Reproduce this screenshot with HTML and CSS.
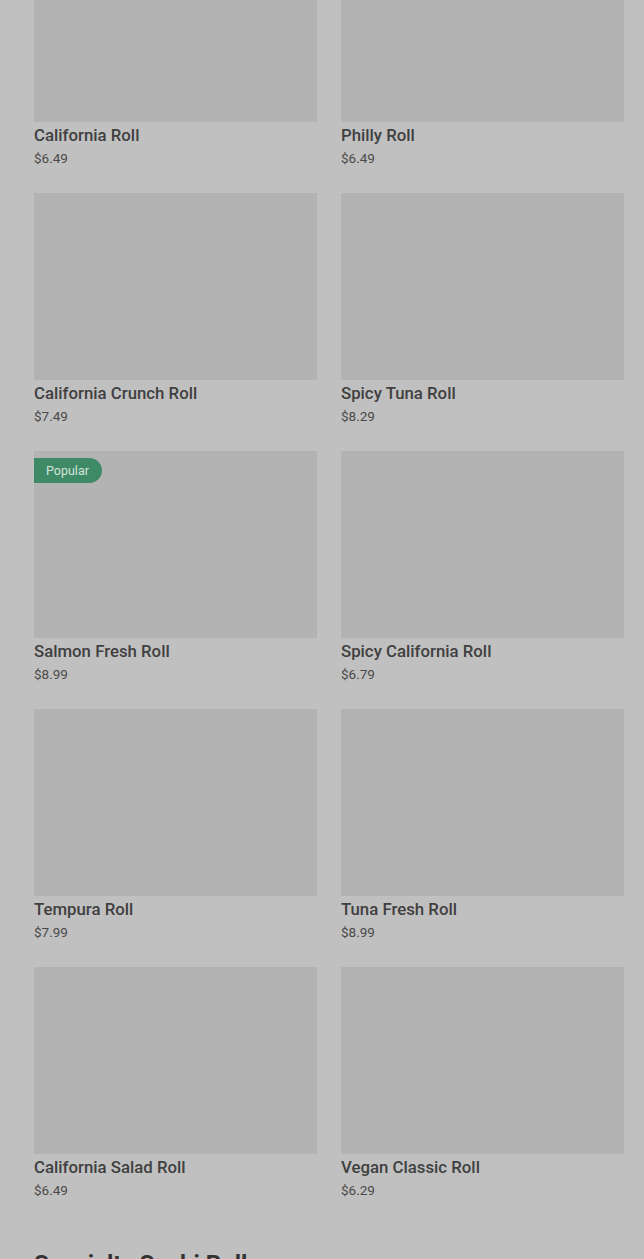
FILE: index.html
```
<!DOCTYPE html>
<html lang="en">
<head>
<meta charset="utf-8">
<title>Sushi Rolls</title>
<link rel="stylesheet" href="styles.css">
</head>
<body>
<main class="page">
  <section class="grid">
    <article class="card"><div class="thumb"></div><h3 class="name">California Roll</h3><p class="price">$6.49</p></article>
    <article class="card"><div class="thumb"></div><h3 class="name">Philly Roll</h3><p class="price">$6.49</p></article>
    <article class="card"><div class="thumb"></div><h3 class="name">California Crunch Roll</h3><p class="price">$7.49</p></article>
    <article class="card"><div class="thumb"></div><h3 class="name">Spicy Tuna Roll</h3><p class="price">$8.29</p></article>
    <article class="card"><div class="thumb"><span class="badge">Popular</span></div><h3 class="name">Salmon Fresh Roll</h3><p class="price">$8.99</p></article>
    <article class="card"><div class="thumb"></div><h3 class="name">Spicy California Roll</h3><p class="price">$6.79</p></article>
    <article class="card"><div class="thumb"></div><h3 class="name">Tempura Roll</h3><p class="price">$7.99</p></article>
    <article class="card"><div class="thumb"></div><h3 class="name">Tuna Fresh Roll</h3><p class="price">$8.99</p></article>
    <article class="card"><div class="thumb"></div><h3 class="name">California Salad Roll</h3><p class="price">$6.49</p></article>
    <article class="card"><div class="thumb"></div><h3 class="name">Vegan Classic Roll</h3><p class="price">$6.29</p></article>
  </section>
  <h2 class="section-title">Specialty Sushi Rolls</h2>
</main>
</body>
</html>
```
FILE: styles.css
```
html, body {
  margin: 0;
  padding: 0;
  background: #c0c0c0;
  height: 1259px;
  overflow: hidden;
}
body {
  font-family: Roboto, "Liberation Sans", Arial, sans-serif;
  color: #3b3b3b;
}
.page {
  margin-top: -65px;
  padding: 0 20px 0 34px;
}
.grid {
  display: grid;
  grid-template-columns: 283px 283px;
  column-gap: 24px;
  row-gap: 25px;
}
.card {
  display: flex;
  flex-direction: column;
}
.thumb {
  position: relative;
  height: 187px;
  background: #b3b3b3;
}
.badge {
  position: absolute;
  top: 7px;
  left: 0;
  height: 25px;
  padding: 0 13px 0 12px;
  display: flex;
  align-items: center;
  font-size: 12.5px;
  color: #d3e3d9;
  background: #3f8a66;
  border-radius: 0 13px 13px 0;
}
.name {
  margin: 2px 0 0;
  font-size: 16.8px;
  line-height: 22px;
  font-weight: 500;
  color: #404040;
}
.price {
  margin: 2px 0 0;
  font-size: 13.5px;
  line-height: 20px;
  color: #4a4a4a;
}
.section-title {
  margin: 50px 0 0;
  font-size: 24px;
  line-height: 28px;
  font-weight: 700;
  color: #333;
}
```
